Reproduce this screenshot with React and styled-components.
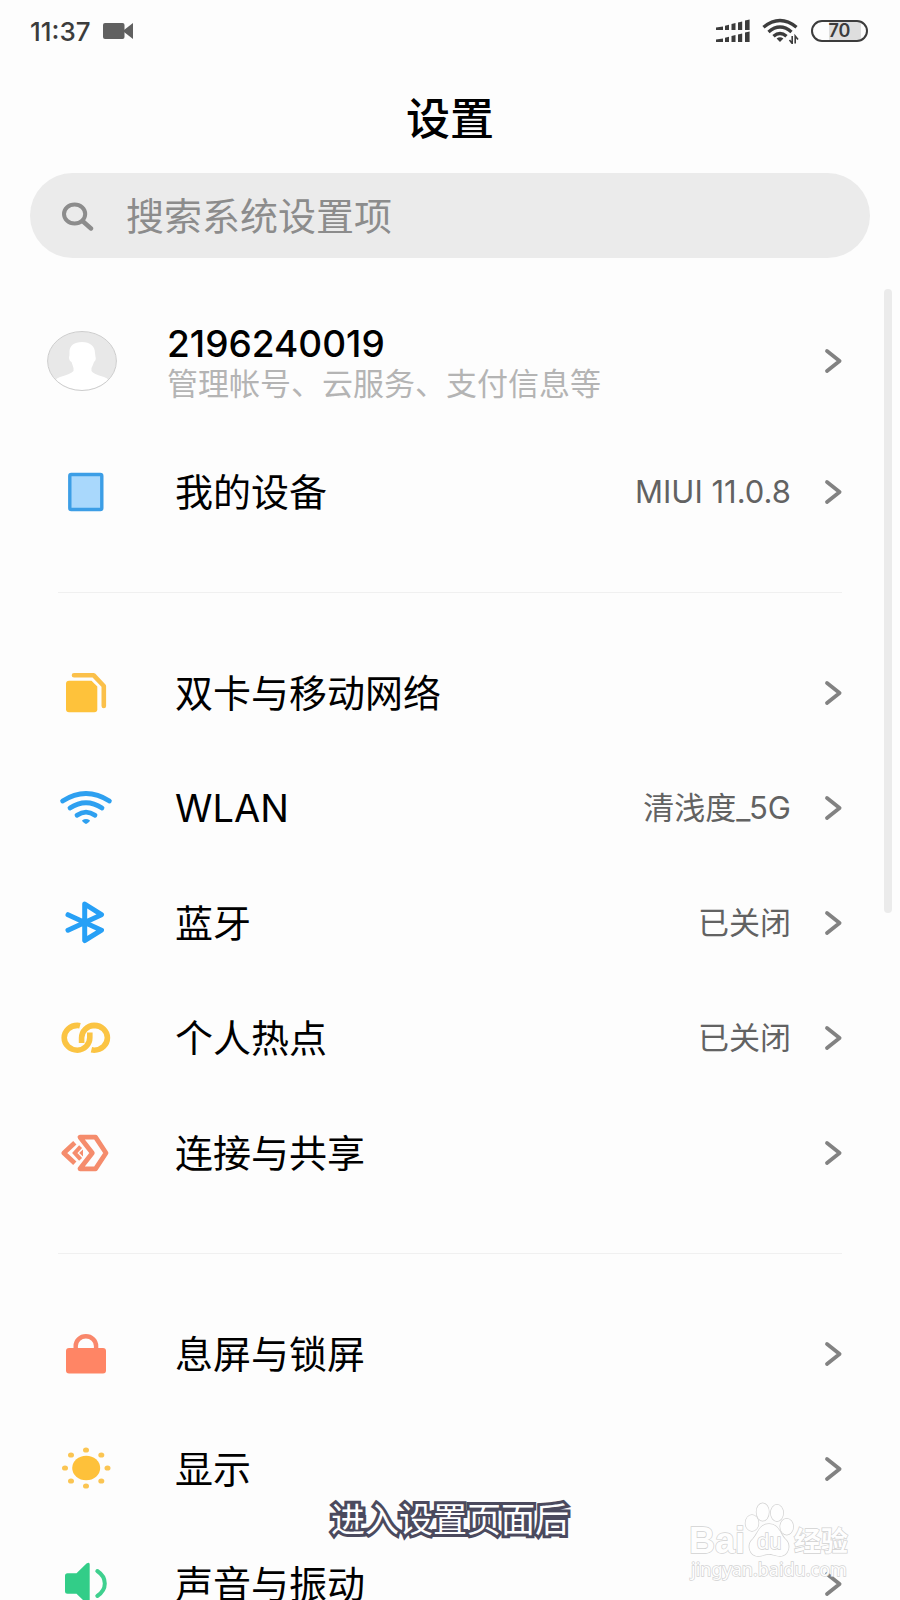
import React from 'react';
import styled, { createGlobalStyle } from 'styled-components'

const GlobalStyle = createGlobalStyle`
    * {
        box-sizing: border-box;
    }

    body {
        margin: 0;
        background: #fdfdfd;
        color: #000;
        font-family: Inter, "Noto Sans CJK SC", sans-serif;
    }
`

const Screen = styled.div`
    position: relative;
    display: flex;
    flex-direction: column;
    height: 100vh;
    overflow: hidden;
`

const StatusBar = styled.header`
    display: flex;
    flex-shrink: 0;
    justify-content: space-between;
    align-items: center;
    height: 62px;
    padding: 0 32px 0 30px;
    color: #3c3c3c;
`

const StatusGroup = styled.div`
    display: flex;
    align-items: center;
    gap: 12px;
`

const Clock = styled.span`
    font-size: 26px;
    font-weight: 500;
`

const Battery = styled.span`
    display: flex;
    align-items: center;
    justify-content: center;
    width: 57px;
    height: 22px;
    border: 2px solid #3c3c3c;
    border-radius: 11px;
    background: linear-gradient(to right, transparent 16px, #dedede 16px, #dedede 48px, transparent 48px);
    font-size: 18px;
    line-height: 18px;
    font-weight: 600;
`

const Title = styled.h1`
    flex-shrink: 0;
    margin: 0;
    height: 111px;
    line-height: 114px;
    font-size: 44px;
    font-weight: 500;
    text-align: center;
`

const SearchBox = styled.label`
    display: flex;
    align-items: center;
    flex-shrink: 0;
    gap: 32px;
    height: 85px;
    margin: 0 30px 30px;
    padding: 0 32px;
    border-radius: 43px;
    background: #ebebeb;
`

const SearchInput = styled.input`
    flex: 1;
    min-width: 0;
    padding: 0;
    border: 0;
    outline: 0;
    background: transparent;
    font: inherit;
    font-size: 38px;

    &::placeholder {
        color: #8c8c8c;
        opacity: 1;
    }
`

const List = styled.nav`
    flex: 1;
    min-height: 0;
    overflow-y: auto;
    scrollbar-width: none;
`

const Row = styled.a`
    display: flex;
    align-items: center;
    gap: 59px;
    height: 115px;
    padding: 0 56px;
    color: inherit;
    text-decoration: none;
`

const AccountRow = styled(Row)`
    gap: 50px;
    height: 146px;
    padding-left: 47px;
`

const Label = styled.span`
    flex: 1;
    font-size: 38px;
    line-height: 48px;
`

const Account = styled.span`
    display: flex;
    flex: 1;
    flex-direction: column;
    padding-top: 6px;
`

const AccountName = styled.span`
    font-size: 37px;
    line-height: 40px;
    font-weight: 500;
`

const AccountHint = styled.span`
    font-size: 31px;
    line-height: 40px;
    color: #b4b4b4;
`

const Value = styled.span`
    font-size: 31px;
    line-height: 48px;
    color: #626262;
`

const End = styled.span`
    display: flex;
    align-items: center;
    gap: 33px;
`

const Divider = styled.hr`
    height: 1px;
    margin: 43px 58px 42px;
    border: 0;
    background: #f0f0f0;
`

const ScrollThumb = styled.div`
    position: absolute;
    top: 289px;
    right: 8px;
    width: 8px;
    height: 39%;
    border-radius: 4px;
    background: #ebebeb;
`

const Caption = styled.p`
    position: absolute;
    right: 0;
    bottom: 56px;
    left: 0;
    margin: 0;
    font-size: 34px;
    line-height: 48px;
    text-align: center;
    color: #fff;
    -webkit-text-stroke: 6px #4b4a5e;
    paint-order: stroke fill;
    pointer-events: none;
`

const Watermark = styled.svg`
    position: absolute;
    right: 44px;
    bottom: 12px;
    fill: #fefefe;
    stroke: #d2d2d2;
    stroke-width: 1.4;
    paint-order: stroke fill;
    pointer-events: none;
`

const Icon = ({ children }) => (
    <svg width="60" height="50" viewBox="0 0 60 50" fill="none" aria-hidden="true">
        {children}
    </svg>
)

const DeviceIcon = () => (
    <Icon>
        <rect x="13.8" y="7.5" width="32" height="35" rx="1.5" fill="#a9d8fc" stroke="#3c9ee6" strokeWidth="3.4" />
    </Icon>
)

const SimIcon = () => (
    <Icon>
        <path d="M13 12.7H35.5L41.3 18.5V41.3Q41.3 44.3 38.3 44.3H13Q10 44.3 10 41.3V15.7Q10 12.7 13 12.7Z" fill="#fec23b" />
        <path d="M18 7.2H37.5L47.8 18V38" stroke="#fbc04a" strokeWidth="4.6" strokeLinecap="round" strokeLinejoin="round" />
    </Icon>
)

const WlanIcon = () => (
    <Icon>
        <g stroke="#2ea0f0" strokeWidth="4.8" strokeLinecap="round">
            <path d="M6.6 18Q30 3 53.4 18" />
            <path d="M14 25Q30 14.4 46 25" />
            <path d="M21 32.2Q30 26 39 32.2" />
        </g>
        <path d="M26.2 37.2Q30 34.6 33.8 37.2Q34.2 38 33 39L31 40.6Q30 41.2 29 40.6L27 39Q25.8 38 26.2 37.2Z" fill="#2ea0f0" />
    </Icon>
)

const BluetoothIcon = () => (
    <Icon>
        <path d="M12 16.7L45.5 32.2L28.7 42.5V6L45.5 16.7L12 32.2" stroke="#27a0f6" strokeWidth="5" strokeLinecap="round" strokeLinejoin="round" />
    </Icon>
)

const HotspotIcon = () => (
    <Icon>
        <g stroke="#fbc443" strokeWidth="5.6">
            <path d="M24 12.8Q22.5 12.4 21.4 12.4A13.2 12.4 0 0 0 21.4 37.2A13 12.4 0 0 0 33.8 24.8V19.5" />
            <path d="M35.4 36.8Q37 37.2 38.2 37.2A13.2 12.4 0 0 0 38.2 12.4A13 12.4 0 0 0 25.6 24.8V30" />
        </g>
    </Icon>
)

const ShareIcon = () => (
    <Icon>
        <g stroke="#f58c6c" strokeWidth="4.8" strokeLinejoin="round">
            <path d="M24 9.2H39.5L50 25L39.5 40.8H24L36.3 25Z" />
            <path d="M18.8 14.8L7.8 25L18.8 35.2" />
        </g>
        <path d="M24.6 18.6L18.8 25L24.6 31.4" stroke="#f58c6c" strokeWidth="4" />
        <path d="M27 21.5L23.2 25L27 28.5Z" fill="#f58c6c" />
    </Icon>
)

const LockIcon = () => (
    <Icon>
        <rect x="10" y="19" width="40" height="25.5" rx="3" fill="#ff8565" />
        <path d="M19.7 21V17A10.2 9.7 0 0 1 40.1 17V21" stroke="#f9876b" strokeWidth="4.4" />
    </Icon>
)

const sunRays = [[30, 6], [30, 42], [9, 24], [51.5, 24], [15, 11], [45.3, 11], [15, 37], [45.3, 37]]

const SunIcon = () => (
    <Icon>
        <ellipse cx="30.2" cy="24" rx="14" ry="12.2" fill="#fec13a" />
        {sunRays.map(([x, y]) => <ellipse key={`${x}-${y}`} cx={x} cy={y} rx="3" ry="2.6" fill="#fbc552" />)}
    </Icon>
)

const SoundIcon = () => (
    <Icon>
        <path d="M11.5 14.3H20.5L30.5 4.6Q33.7 2.4 33.7 5.5V43.5Q33.7 46.6 30.5 44.4L20.5 34.7H11.5Q9 34.7 9 32.2V16.8Q9 14.3 11.5 14.3Z" fill="#32cd88" />
        <path d="M41.3 12Q48.8 17 48.8 24.5T41.3 37" stroke="#3fd08f" strokeWidth="4" strokeLinecap="round" />
    </Icon>
)

const Chevron = () => (
    <svg width="20" height="28" viewBox="0 0 20 28" fill="none" aria-hidden="true">
        <path d="M3 4L15.6 14L3 24" stroke="#828282" strokeWidth="3.8" strokeLinecap="round" strokeLinejoin="round" />
    </svg>
)

const Avatar = () => (
    <svg width="70" height="60" viewBox="0 0 70 60" aria-hidden="true">
        <clipPath id="face"><ellipse cx="35" cy="30" rx="34" ry="29" /></clipPath>
        <ellipse cx="35" cy="30" rx="34.2" ry="29.3" fill="#e8e8e8" />
        <path clipPath="url(#face)" fill="#fff" d="M35 11C27 11 22 15 22.5 22Q22.5 25 22 26Q22 30 24.5 31Q26 35.5 26.5 37V40Q24 43 13 46Q6 48 4 60H66Q64 48 57 46Q46 43 44.5 40V37Q46 34 47 31Q49.5 29 48.5 26L48 22C48 15 43 11 35 11Z" />
        <ellipse cx="35" cy="30" rx="34.4" ry="29.5" fill="none" stroke="#cdcdcd" />
    </svg>
)

const SearchIcon = () => (
    <svg width="32" height="30" viewBox="0 0 32 30" fill="none" stroke="#8c8c8c" aria-hidden="true">
        <ellipse cx="12.6" cy="13" rx="10.6" ry="9.6" strokeWidth="4" />
        <path d="M20.5 20L29 27.5" strokeWidth="4.4" strokeLinecap="round" />
    </svg>
)

const CameraIcon = () => (
    <svg width="30" height="18" viewBox="0 0 30 18" fill="#606060" aria-hidden="true">
        <rect x="0" y="1" width="21.5" height="16" rx="2" />
        <path d="M21 8L30 1V17L21 10Z" />
    </svg>
)

const bars = [[0, 7, 3.4], [9, 4, 5.2], [15.5, 4, 7], [22, 4.2, 8.6], [29, 4.6, 10.4]]

const SignalIcon = () => (
    <svg width="34" height="24" viewBox="0 0 34 24" fill="#3c3c3c" aria-hidden="true">
        {[11, 23].map(base => bars.map(([x, w, h]) => (
            <path key={`${base}-${x}`} d={`M${x} ${base}V${base - h + 1}L${x + w} ${base - h}V${base}Z`} />
        )))}
    </svg>
)

const StatusWifi = () => (
    <svg width="37" height="26" viewBox="0 0 37 26" fill="none" stroke="#3c3c3c" aria-hidden="true">
        <g strokeWidth="3.4">
            <path d="M1.5 9.3Q18 -4.2 34.5 9.3" />
            <path d="M6.5 14Q18 4.1 29.5 14" />
            <path d="M11.5 18.2Q18 12.6 24.5 18.2" />
        </g>
        <path d="M14.6 20.6Q18 17.8 21.4 20.6L18 24Z" fill="#3c3c3c" stroke="none" />
        <path d="M30.2 18V25.5L27.5 22M33.2 25.5V18L36 21.5" strokeWidth="1.6" />
    </svg>
)

const BaiduMark = () => (
    <Watermark width="170" height="92" viewBox="0 0 170 92" role="img" aria-label="Baidu">
        <text x="3" y="57" fontSize="36" fontWeight="700" fontFamily="Liberation Sans, sans-serif">Bai</text>
        <ellipse cx="66" cy="27" rx="6.5" ry="8" />
        <ellipse cx="76.7" cy="16" rx="6.2" ry="8.8" />
        <ellipse cx="91" cy="17" rx="6.2" ry="8.2" />
        <ellipse cx="100.7" cy="30.7" rx="6.5" ry="8" />
        <path d="M83 28C73 28 72 38 67 43C60 49 64 60 72 60C77 60 79 58 83 58S89 60 94 60C102 60 106 49 99 43C94 38 93 28 83 28Z" />
        <text x="71" y="53" fontSize="22" fontFamily="Liberation Sans, sans-serif">du</text>
        <text x="108" y="55" fontSize="27" fontWeight="700" fontFamily="Noto Sans CJK SC, sans-serif">经验</text>
        <text x="5" y="80" fontSize="18" fontFamily="Noto Sans, sans-serif">jingyan.baidu.com</text>
    </Watermark>
)

const groups = [
    [
        { icon: SimIcon, label: '双卡与移动网络' },
        { icon: WlanIcon, label: 'WLAN', value: '清浅度_5G' },
        { icon: BluetoothIcon, label: '蓝牙', value: '已关闭' },
        { icon: HotspotIcon, label: '个人热点', value: '已关闭' },
        { icon: ShareIcon, label: '连接与共享' },
    ],
    [
        { icon: LockIcon, label: '息屏与锁屏' },
        { icon: SunIcon, label: '显示' },
        { icon: SoundIcon, label: '声音与振动' },
    ],
]

const Item = ({ icon: Glyph, label, value }) => (
    <Row href="#">
        <Glyph />
        <Label>{label}</Label>
        <End>
            {value && <Value>{value}</Value>}
            <Chevron />
        </End>
    </Row>
)

const App = () => (
    <Screen>
        <GlobalStyle />
        <StatusBar>
            <StatusGroup>
                <Clock>11:37</Clock>
                <CameraIcon />
            </StatusGroup>
            <StatusGroup>
                <SignalIcon />
                <StatusWifi />
                <Battery>70</Battery>
            </StatusGroup>
        </StatusBar>
        <Title>设置</Title>
        <SearchBox>
            <SearchIcon />
            <SearchInput type="text" placeholder="搜索系统设置项" aria-label="搜索系统设置项" />
        </SearchBox>
        <List>
            <AccountRow href="#">
                <Avatar />
                <Account>
                    <AccountName>2196240019</AccountName>
                    <AccountHint>管理帐号、云服务、支付信息等</AccountHint>
                </Account>
                <Chevron />
            </AccountRow>
            <Item icon={DeviceIcon} label="我的设备" value="MIUI 11.0.8" />
            {groups.map((items, i) => (
                <React.Fragment key={i}>
                    <Divider />
                    {items.map(item => <Item key={item.label} {...item} />)}
                </React.Fragment>
            ))}
        </List>
        <ScrollThumb />
        <Caption>进入设置页面后</Caption>
        <BaiduMark />
    </Screen>
);

export default App;
